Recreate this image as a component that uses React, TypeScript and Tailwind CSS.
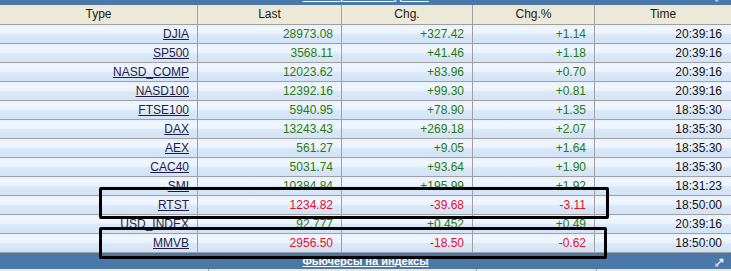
import React from 'react';

interface Quote {
  type: string;
  last: string;
  chg: string;
  pct: string;
  time: string;
  down?: boolean;
}

const quotes: Quote[] = [
  { type: 'DJIA', last: '28973.08', chg: '+327.42', pct: '+1.14', time: '20:39:16' },
  { type: 'SP500', last: '3568.11', chg: '+41.46', pct: '+1.18', time: '20:39:16' },
  { type: 'NASD_COMP', last: '12023.62', chg: '+83.96', pct: '+0.70', time: '20:39:16' },
  { type: 'NASD100', last: '12392.16', chg: '+99.30', pct: '+0.81', time: '20:39:16' },
  { type: 'FTSE100', last: '5940.95', chg: '+78.90', pct: '+1.35', time: '18:35:30' },
  { type: 'DAX', last: '13243.43', chg: '+269.18', pct: '+2.07', time: '18:35:30' },
  { type: 'AEX', last: '561.27', chg: '+9.05', pct: '+1.64', time: '18:35:30' },
  { type: 'CAC40', last: '5031.74', chg: '+93.64', pct: '+1.90', time: '18:35:30' },
  { type: 'SMI', last: '10384.84', chg: '+195.99', pct: '+1.92', time: '18:31:23' },
  { type: 'RTST', last: '1234.82', chg: '-39.68', pct: '-3.11', time: '18:50:00', down: true },
  { type: 'USD_INDEX', last: '92.777', chg: '+0.452', pct: '+0.49', time: '20:39:16' },
  { type: 'MMVB', last: '2956.50', chg: '-18.50', pct: '-0.62', time: '18:50:00', down: true },
];

const cols = 'grid grid-cols-[198px_144px_131px_122px_136px]';

const ExpandIcon = () => (
  <svg width="9" height="9" viewBox="0 0 9 9" fill="none">
    <path d="M4.5 1.5H7.5V4.5" stroke="#ffffff" strokeWidth="1.6" />
    <path d="M7.2 1.8L1.8 7.2" stroke="#dbe9f8" strokeWidth="1.6" />
    <path d="M1 5.5V8H3.5" stroke="#cfe2f6" strokeWidth="1.2" />
  </svg>
);

const SectionBar = ({ title }: { title: string }) => (
  <div className="relative h-4 bg-[#4a78a9] flex justify-center">
    <a className="text-white font-bold text-[11px] leading-4 underline">{title}</a>
    <div className="absolute right-[7px] top-[5px]">
      <ExpandIcon />
    </div>
  </div>
);

const App: React.FC = () => {
  return (
    <div className="relative w-[731px] h-[271px] overflow-hidden bg-white font-['Liberation_Sans',Arial,sans-serif] text-[12px]">
      {/* previous section bar, cut off */}
      <div className="h-[5px] overflow-hidden flex flex-col justify-end bg-[#4a78a9]">
        <div className="shrink-0 mb-[1px]">
          <SectionBar title="Фьючерсы на индексы" />
        </div>
      </div>

      {/* Header */}
      <div className={`${cols} h-5 bg-[#ece9d8] border-b border-[#a0a0a0] text-[#1a1a1a]`}>
        {['Type', 'Last', 'Chg.', 'Chg.%', 'Time'].map((h, i) => (
          <div
            key={h}
            className={`flex items-center justify-center leading-[19px] ${i < 4 ? 'border-r border-[#a0a0a0]' : ''}`}
          >
            {h}
          </div>
        ))}
      </div>

      {/* Rows */}
      {quotes.map((q) => {
        const color = q.down ? 'text-[#e4102b]' : 'text-[#2a7a12]';
        return (
          <div
            key={q.type}
            className={`${cols} h-[19px] border-b border-[#a0a0a0] bg-[linear-gradient(to_bottom,#e7f0fc_0%,#eff6ff_18%,#ebf3fe_46%,#dae8f8_54%,#d3e2f5_100%)] leading-[18px]`}
          >
            <div className="text-right pr-2 border-r border-[#a0a0a0]">
              <a className="text-[#1f1d48] underline">{q.type}</a>
            </div>
            <div className={`text-right pr-2 border-r border-[#a0a0a0] ${color}`}>{q.last}</div>
            <div className={`text-right pr-2 border-r border-[#a0a0a0] ${color}`}>{q.chg}</div>
            <div className={`text-right pr-2 border-r border-[#a0a0a0] ${color}`}>{q.pct}</div>
            <div className="text-right pr-[9px] text-[#111111]">{q.time}</div>
          </div>
        );
      })}

      <SectionBar title="Фьючерсы на индексы" />

      {/* next table header, cut off */}
      <div className="grid grid-cols-[209px_268px_120px_134px] h-[3px] bg-[#ece9d8]">
        <div className="border-r border-[#a0a0a0]" />
        <div className="border-r border-[#a0a0a0]" />
        <div className="border-r border-[#a0a0a0]" />
        <div />
      </div>

      {/* annotation boxes */}
      <div className="absolute left-[99px] top-[187px] w-[510px] h-[32px] border-[3px] border-black rounded-[2px]" />
      <div className="absolute left-[99px] top-[227px] w-[508px] h-[32px] border-[3px] border-black rounded-[2px]" />
    </div>
  );
};

export default App;
